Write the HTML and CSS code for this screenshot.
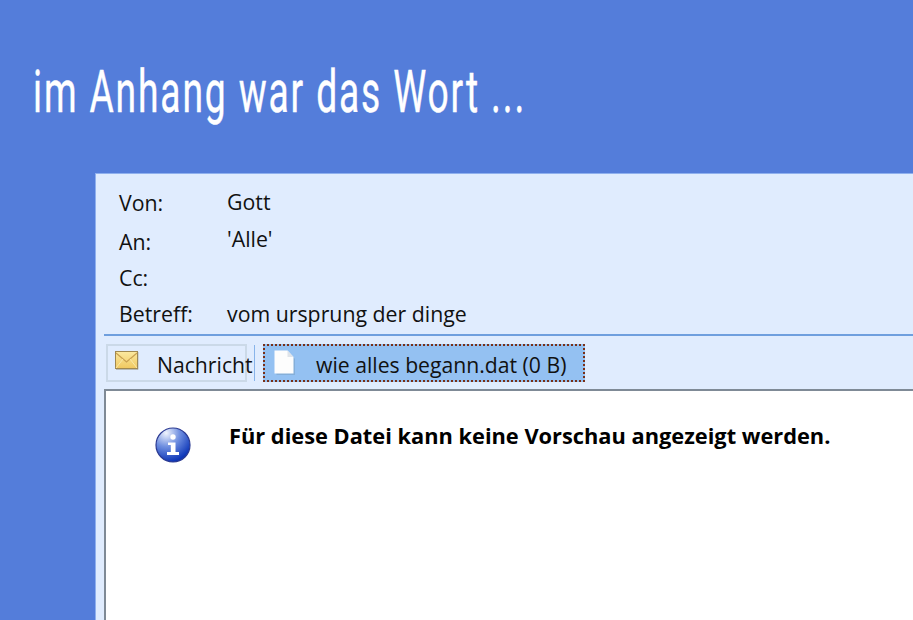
FILE: index.html
```html
<!DOCTYPE html>
<html lang="de">
<head>
<meta charset="utf-8">
<title>im Anhang war das Wort</title>
<link rel="stylesheet" href="styles.css">
</head>
<body>
<h1 class="title"><span class="title-text">im Anhang war das Wort ...</span></h1>
<main class="mail">
  <section class="fields">
    <div class="row row-von"><span class="label">Von:</span><span class="value">Gott</span></div>
    <div class="row row-an"><span class="label">An:</span><span class="value">'Alle'</span></div>
    <div class="row row-cc"><span class="label">Cc:</span><span class="value"></span></div>
    <div class="row row-betreff"><span class="label">Betreff:</span><span class="value">vom ursprung der dinge</span></div>
  </section>
  <nav class="tabs">
    <div class="tab tab-msg">
      <svg class="env" width="24" height="20" viewBox="0 0 24 20">
        <defs><linearGradient id="eg" x1="0" y1="0" x2="0" y2="1"><stop offset="0" stop-color="#fbe9a0"/><stop offset="1" stop-color="#f0c860"/></linearGradient></defs>
        <rect x="0.5" y="0.5" width="22" height="17" fill="url(#eg)" stroke="#a08850"/>
        <path d="M1 2 L11.5 11 L22 2" fill="none" stroke="#c9a050" stroke-width="1.2"/>
        <path d="M1 17 L8 8 M22 17 L15 8" fill="none" stroke="#f8e8a8" stroke-width="1"/>
        <path d="M1 18.5 H23 V1" fill="none" stroke="#8f8a70" stroke-width="1" opacity=".5"/>
      </svg>
      <span class="tab-label">Nachricht</span>
    </div>
    <div class="sep"></div>
    <div class="tab tab-file">
      <svg class="doc" width="24" height="28" viewBox="0 0 24 28">
        <path d="M2.5 3 H15 L21 9 V25 H2.5 Z" fill="#7fa6cf" opacity=".7" transform="translate(1 1)"/>
        <path d="M1.5 1.5 H14.5 L20.5 8 V24.5 H1.5 Z" fill="#fdfdfd"/>
        <path d="M14.5 1.5 V8 H20.5 Z" fill="#dfe4ea"/>
      </svg>
      <span class="tab-label">wie alles begann.dat (0 B)</span>
    </div>
  </nav>
  <section class="preview">
    <svg class="info" width="36" height="36" viewBox="0 0 36 36">
      <defs>
        <radialGradient id="ig" cx="0.3" cy="0.15" r="1">
          <stop offset="0" stop-color="#f0f4fd"/><stop offset="0.4" stop-color="#6f8fe0"/><stop offset="0.85" stop-color="#0d36b8"/><stop offset="1" stop-color="#1030a0"/>
        </radialGradient>
      </defs>
      <circle cx="18" cy="18" r="17" fill="url(#ig)" stroke="#2b3a92" stroke-width="1.2"/>
      <circle cx="18" cy="10" r="2.7" fill="#fff"/>
      <path d="M13 15.5 H20.5 V25 H24 V28 H12 V25 H15.8 V18 H13 Z" fill="#fff"/>
    </svg>
    <p class="notice">Für diese Datei kann keine Vorschau angezeigt werden.</p>
  </section>
</main>
</body>
</html>
```
FILE: styles.css
```css
* { box-sizing: border-box; }
html, body { margin: 0; height: 100%; }
body {
  width: 913px;
  height: 620px;
  overflow: hidden;
  background: #547dda;
  display: flex;
  flex-direction: column;
  font-family: "Open Sans", "Noto Sans", sans-serif;
  color: #111;
}
.title {
  margin: 0;
  height: 173px;
  padding: 54px 0 0 33px;
  font-family: Roboto, "Liberation Sans", sans-serif;
  font-weight: 400;
  font-size: 60px;
  line-height: 76px;
  letter-spacing: 3px;
  -webkit-text-stroke: 0.4px #fff;
  color: #fff;
  white-space: nowrap;
}
.title-text {
  display: inline-block;
  transform: scaleX(0.62);
  transform-origin: left center;
}
.mail {
  flex: 1;
  margin-left: 95px;
  background: #e0ecfe;
  border-top: 1px solid #8fb0ee;
  border-left: 1px solid #8fb0ee;
  display: flex;
  flex-direction: column;
  min-height: 0;
}
.fields {
  height: 160px;
  padding: 14px 0 0 23px;
  font-size: 21.3px;
  line-height: 30px;
}
.row { display: flex; height: 37px; }
.label { width: 108px; }
.value { margin-top: -1px; }
.row-an .label { padding-top: 2px; }
.row-an .value { margin-top: -1px; }
.row-cc .label { padding-top: 1px; }
.row-betreff .label, .row-betreff .value { margin-top: 0; }
.tabs {
  margin-left: 8px;
  height: 55px;
  border-top: 2px solid #6f9fde;
  padding: 8px 0 0 2px;
  display: flex;
  align-items: flex-start;
  font-size: 21.2px;
}
.tab { height: 38px; display: flex; align-items: center; white-space: nowrap; }
.tab-msg {
  width: 141px;
  border: 2px solid #cbd9e8;
  position: relative;
  padding-left: 7px;
}
.env { margin-top: -5px; flex: none; }
.tab-msg .tab-label { margin-left: 18px; margin-right: -6px; margin-top: 2px; }
.sep { width: 1px; height: 36px; margin: 1px 8px 0 7px; background: #88b4ea; }
.tab-file {
  width: 322px;
  background: #94c1f2;
  border: 2px dotted #7a3018;
  padding-left: 8px;
}
.doc { flex: none; margin-top: -1px; }
.tab-file .tab-label { margin-left: 19px; margin-top: 2px; }
.preview {
  flex: 1;
  margin-left: 8px;
  background: #fff;
  border-top: 2px solid #7f8a96;
  border-left: 2px solid #7f8a96;
  padding: 36px 0 0 49px;
  display: flex;
  align-items: flex-start;
  min-height: 0;
}
.info { flex: none; }
.notice {
  margin: -6px 0 0 38px;
  font-size: 21.8px;
  line-height: 30px;
  font-weight: 700;
  color: #000;
  white-space: nowrap;
}
```
